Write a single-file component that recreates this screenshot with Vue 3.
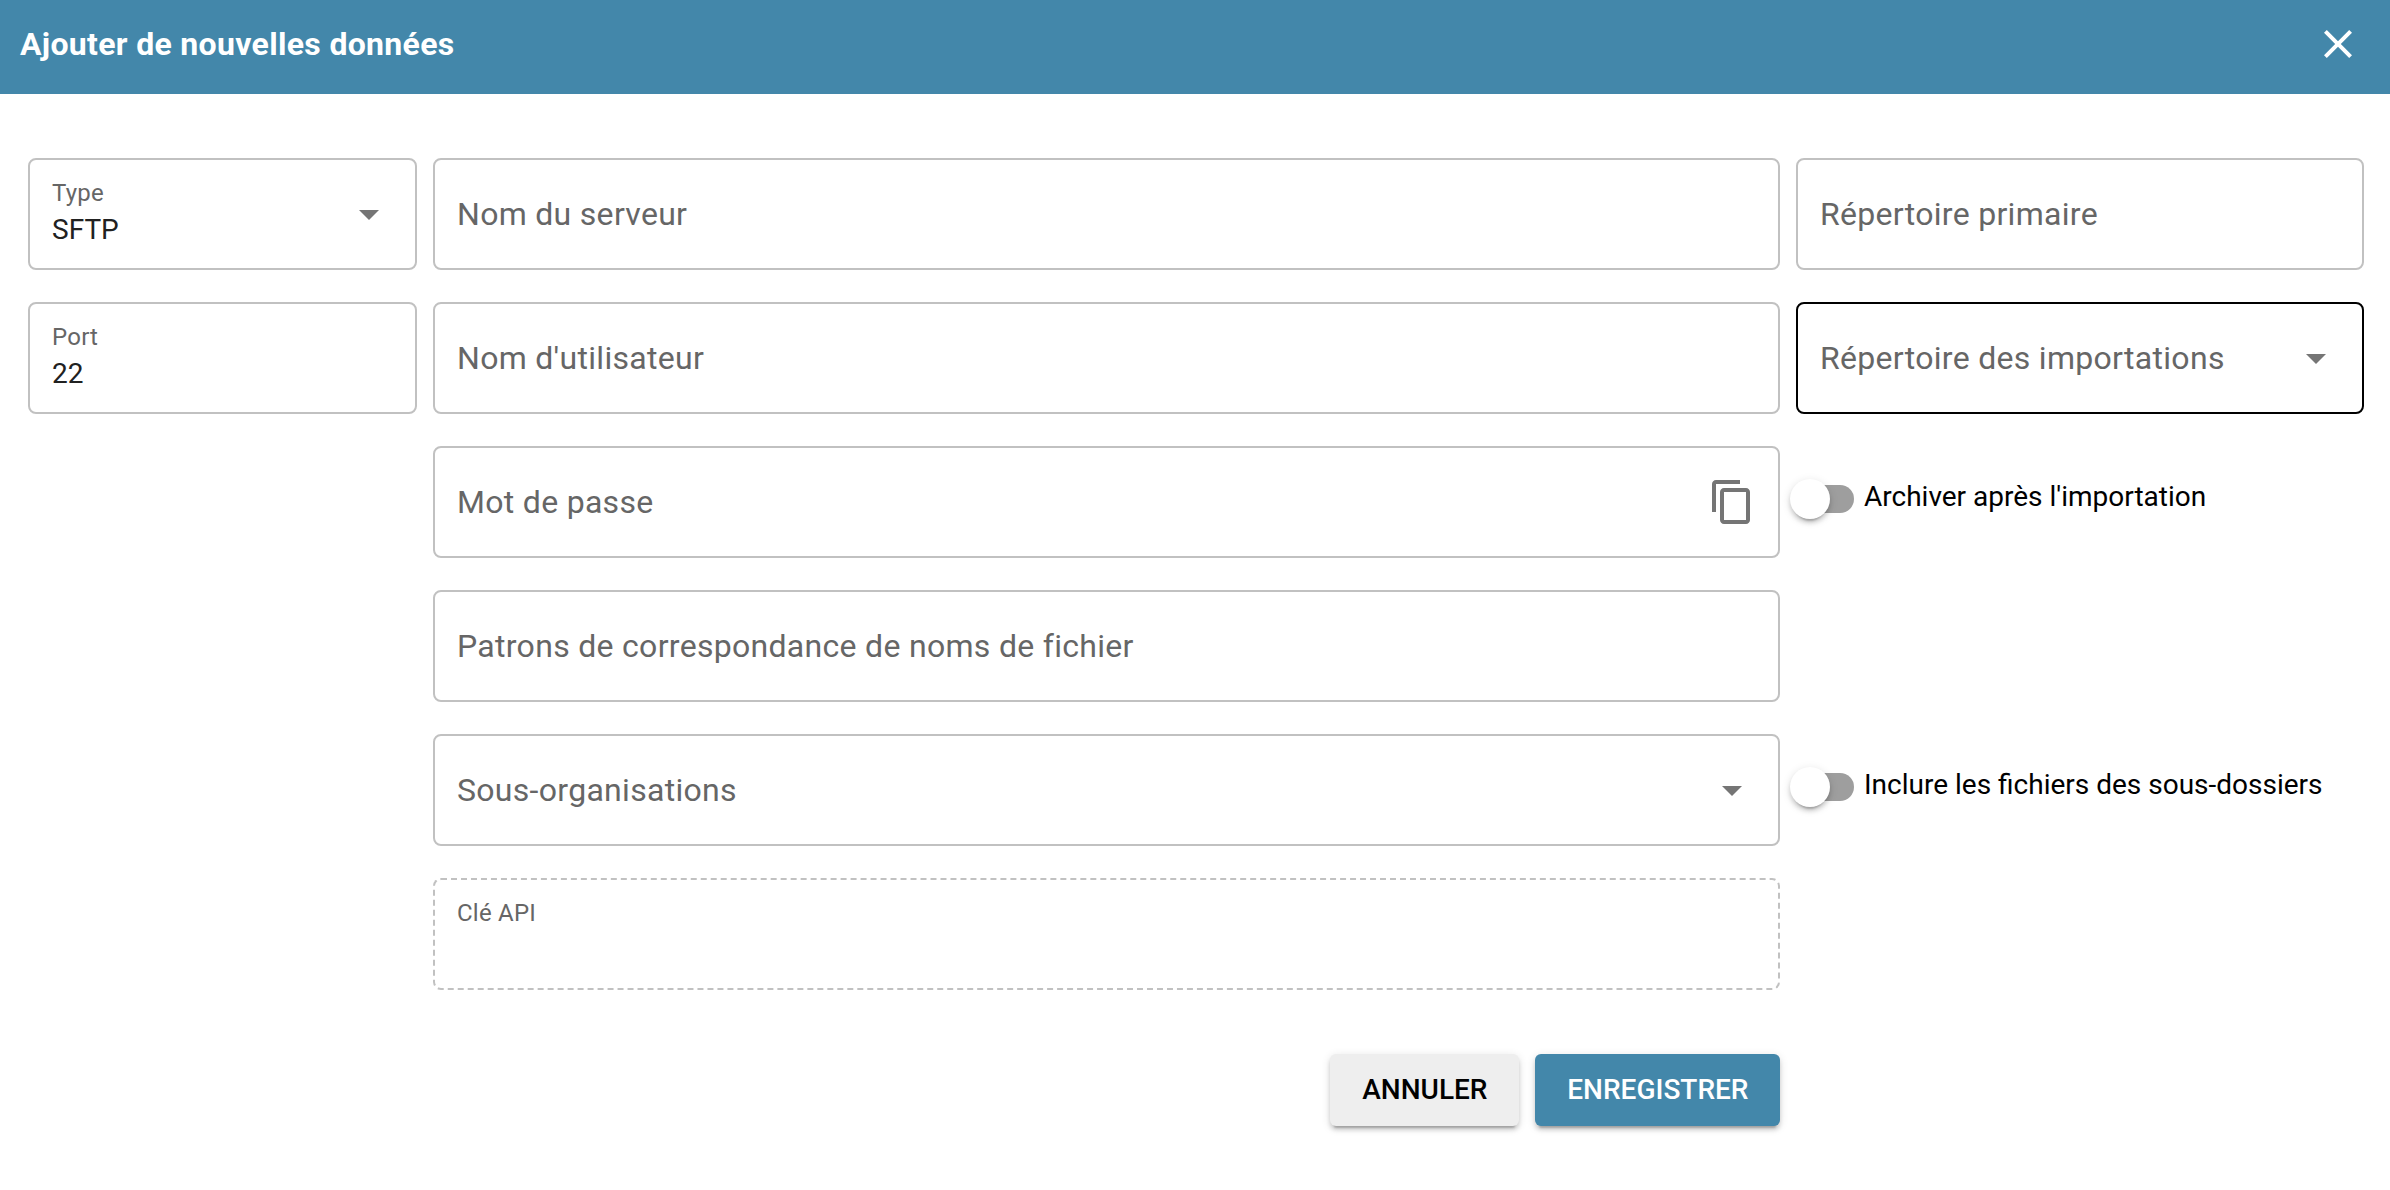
<script setup>
import { reactive } from 'vue'

const columns = [
  {
    name: 'connection',
    items: [
      { kind: 'field', label: 'Type', value: 'SFTP', icon: 'arrow' },
      { kind: 'field', label: 'Port', value: '22' },
    ],
  },
  {
    name: 'server',
    items: [
      { kind: 'field', label: 'Nom du serveur' },
      { kind: 'field', label: "Nom d'utilisateur" },
      { kind: 'field', label: 'Mot de passe', icon: 'copy' },
      { kind: 'field', label: 'Patrons de correspondance de noms de fichier' },
      { kind: 'field', label: 'Sous-organisations', icon: 'arrow' },
      { kind: 'field', label: 'Clé API', value: '', disabled: true },
    ],
  },
  {
    name: 'folders',
    items: [
      { kind: 'field', label: 'Répertoire primaire' },
      { kind: 'field', label: 'Répertoire des importations', icon: 'arrow', active: true },
      { kind: 'toggle', key: 'archive', label: "Archiver après l'importation" },
      { kind: 'spacer' },
      { kind: 'toggle', key: 'subfolders', label: 'Inclure les fichiers des sous-dossiers' },
    ],
  },
]

const toggles = reactive({ archive: false, subfolders: false })
</script>

<template>
  <div class="dialog">
    <header class="dialog-header">
      <h1 class="dialog-title">Ajouter de nouvelles données</h1>
      <button class="close" aria-label="Fermer">
        <svg viewBox="0 0 24 24" width="48" height="48">
          <path d="M19 6.41L17.59 5 12 10.59 6.41 5 5 6.41 10.59 12 5 17.59 6.41 19 12 13.41 17.59 19 19 17.59 13.41 12z" />
        </svg>
      </button>
    </header>

    <main class="form">
      <div v-for="column in columns" :key="column.name" class="column" :class="column.name">
        <template v-for="(item, i) in column.items" :key="i">
          <div
            v-if="item.kind === 'field'"
            class="field"
            :class="{ active: item.active, disabled: item.disabled }"
          >
            <div v-if="item.value !== undefined" class="texts filled">
              <span class="label-small">{{ item.label }}</span>
              <span class="value">{{ item.value }}</span>
            </div>
            <div v-else class="texts">
              <span class="label">{{ item.label }}</span>
            </div>
            <svg v-if="item.icon === 'arrow'" class="arrow" viewBox="0 0 20 10" width="20" height="10">
              <path d="M0 0h20L10 10z" />
            </svg>
            <svg v-if="item.icon === 'copy'" class="copy" viewBox="0 0 24 24" width="48" height="48">
              <path d="M16 1H4c-1.1 0-2 .9-2 2v14h2V3h12V1zm3 4H8c-1.1 0-2 .9-2 2v14c0 1.1.9 2 2 2h11c1.1 0 2-.9 2-2V7c0-1.1-.9-2-2-2zm0 16H8V7h11v14z" />
            </svg>
          </div>

          <div
            v-else-if="item.kind === 'toggle'"
            class="toggle-row"
            @click="toggles[item.key] = !toggles[item.key]"
          >
            <span class="switch" :class="{ on: toggles[item.key] }">
              <span class="track"></span>
              <span class="thumb"></span>
            </span>
            <span class="toggle-label">{{ item.label }}</span>
          </div>

          <div v-else class="spacer"></div>
        </template>

        <div v-if="column.name === 'server'" class="actions">
          <button class="btn">ANNULER</button>
          <button class="btn primary">ENREGISTRER</button>
        </div>
      </div>
    </main>
  </div>
</template>

<style>
body {
  margin: 0;
  background: #fff;
}
</style>

<style scoped>
.dialog {
  width: 2390px;
  height: 1190px;
  overflow: hidden;
  background: #fff;
  color: #000;
  font-family: Roboto, 'Liberation Sans', sans-serif;
}

.dialog * {
  box-sizing: border-box;
}

.dialog-header {
  display: flex;
  align-items: flex-start;
  justify-content: space-between;
  height: 94px;
  padding: 20px 28px 0 20px;
  background: #4387aa;
  color: #fff;
}

.dialog-title {
  margin: 0;
  font-size: 32px;
  font-weight: 700;
  line-height: 48px;
  letter-spacing: 0.32px;
}

button {
  margin: 0;
  border: 0;
  font-family: inherit;
  white-space: nowrap;
}

.close {
  width: 48px;
  height: 48px;
  padding: 0;
  background: none;
}

.close svg {
  display: block;
  fill: #fff;
}

.form {
  display: grid;
  grid-template-columns: 389px 1347px 568px;
  column-gap: 16px;
  align-items: start;
  padding: 64px 26px 0 28px;
}

.column {
  display: flex;
  flex-direction: column;
  gap: 32px;
}

.field {
  display: flex;
  align-items: center;
  justify-content: space-between;
  height: 112px;
  padding: 0 22px;
  border: 2px solid #c1c1c1;
  border-radius: 8px;
  white-space: nowrap;
}

.field.active {
  border-color: #000;
}

.field.disabled {
  border-style: dashed;
}

.texts.filled {
  display: flex;
  flex-direction: column;
  align-self: flex-start;
  gap: 1px;
  padding-top: 17px;
}

.label {
  color: #666;
  font-size: 32px;
  line-height: 48px;
  letter-spacing: 0.3px;
  font-variant-ligatures: none;
}

.label-small {
  color: #666;
  font-size: 24px;
  line-height: 32px;
  letter-spacing: 0.225px;
}

.value {
  min-height: 40px;
  color: #212121;
  font-size: 28px;
  line-height: 40px;
}

.arrow {
  margin: 2px 14px 0 0;
  fill: #757575;
}

.copy {
  fill: #757575;
}

.toggle-row {
  display: flex;
  align-items: flex-start;
  height: 112px;
  margin-left: -6px;
  padding-top: 33px;
  white-space: nowrap;
}

.switch {
  display: grid;
  align-items: center;
  width: 64px;
  height: 40px;
}

.track,
.thumb {
  grid-area: 1 / 1;
}

.track {
  justify-self: end;
  width: 56px;
  height: 28px;
  border-radius: 14px;
  background: #9e9e9e;
}

.thumb {
  width: 40px;
  height: 40px;
  border-radius: 50%;
  background: #fff;
  box-shadow:
    0 6px 2px -4px rgba(0, 0, 0, 0.2),
    0 4px 4px rgba(0, 0, 0, 0.14),
    0 2px 10px rgba(0, 0, 0, 0.12);
}

.switch.on .thumb {
  justify-self: end;
}

.toggle-label {
  margin: -2px 0 0 10px;
  font-size: 28px;
  line-height: 40px;
}

.spacer {
  height: 112px;
}

.actions {
  display: flex;
  justify-content: flex-end;
  gap: 16px;
  margin-top: 32px;
}

.btn {
  height: 72px;
  padding: 0 31.5px 0 32.3px;
  border-radius: 6px;
  background: #eee;
  color: #000;
  font-size: 28px;
  font-weight: 500;
  line-height: 72px;
  box-shadow:
    0 6px 2px -4px rgba(0, 0, 0, 0.2),
    0 4px 4px rgba(0, 0, 0, 0.14),
    0 2px 10px rgba(0, 0, 0, 0.12);
}

.btn.primary {
  background: #4387aa;
  color: #fff;
}
</style>
